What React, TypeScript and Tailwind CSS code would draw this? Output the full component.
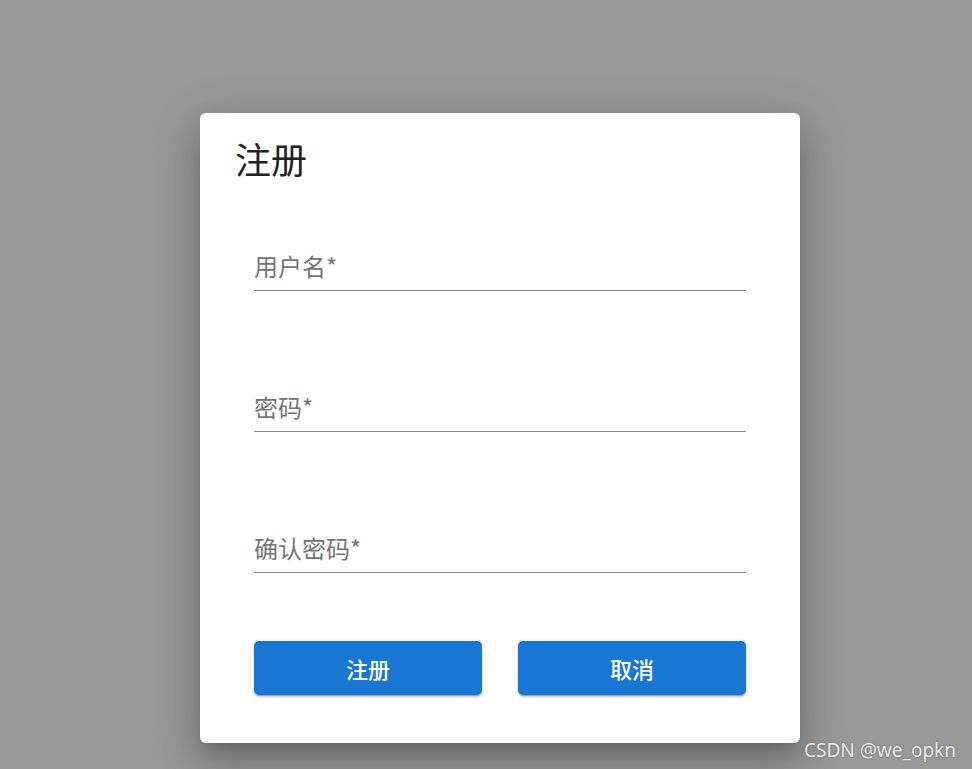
import React from "react";

const font = { fontFamily: '"Noto Sans CJK SC", "Noto Sans", sans-serif' };

function Field({ label }: { label: string }) {
  return (
    <div className="flex flex-col">
      <div className="h-[46px] flex items-end pb-[9px] text-[24px] leading-[30px] text-[#757575]">{label}</div>
      <div className="h-[1px] bg-[#888888]" />
    </div>
  );
}

export default function App() {
  return (
    <div className="relative w-full h-[769px] bg-[#999999] overflow-hidden" style={font}>
      <div className="pt-[113px] pl-[200px]">
        <div className="w-[600px] h-[630px] bg-white rounded-[6px] shadow-[0_11px_15px_-7px_rgba(0,0,0,0.2),0_24px_38px_3px_rgba(0,0,0,0.14),0_9px_46px_8px_rgba(0,0,0,0.12)] flex flex-col">
          <div className="pl-[35px] pt-[21px] text-[36px] leading-[48px] text-[#212121]">注册</div>
          <div className="px-[54px] pt-[62px] flex flex-col gap-[94px]">
            <Field label="用户名*" />
            <Field label="密码*" />
            <Field label="确认密码*" />
          </div>
          <div className="px-[54px] pt-[68px] flex justify-between">
            <button className="w-[228px] h-[54px] rounded-[5px] bg-[#1976d2] text-white text-[22px] font-medium shadow-[0_3px_1px_-2px_rgba(0,0,0,0.2),0_2px_2px_0_rgba(0,0,0,0.14),0_1px_5px_0_rgba(0,0,0,0.12)]">注册</button>
            <button className="w-[228px] h-[54px] rounded-[5px] bg-[#1976d2] text-white text-[22px] font-medium shadow-[0_3px_1px_-2px_rgba(0,0,0,0.2),0_2px_2px_0_rgba(0,0,0,0.14),0_1px_5px_0_rgba(0,0,0,0.12)]">取消</button>
          </div>
        </div>
      </div>
      <div className="absolute right-[16px] bottom-[7px] text-[19px] leading-[24px] text-[#ededed] [text-shadow:0_0_2px_rgba(0,0,0,0.35)]" style={{ fontFamily: '"Noto Sans", sans-serif' }}>CSDN @we_opkn</div>
    </div>
  );
}
